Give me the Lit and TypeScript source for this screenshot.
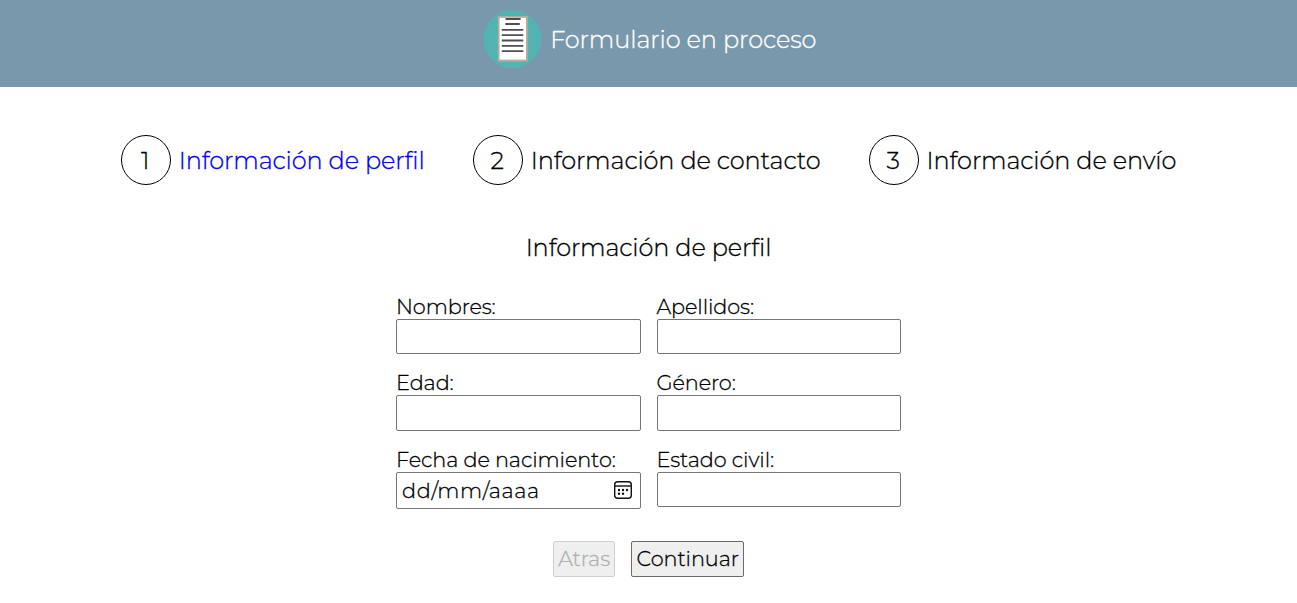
import { LitElement, html, css } from "lit";
import { customElement, state } from "lit/decorators.js";
import { classMap } from "lit/directives/class-map.js";

const STEPS = ["Información de perfil", "Información de contacto", "Información de envío"];
const FIELDS = [
  { label: "Nombres:", date: false },
  { label: "Apellidos:", date: false },
  { label: "Edad:", date: false },
  { label: "Género:", date: false },
  { label: "Fecha de nacimiento:", date: true },
  { label: "Estado civil:", date: false },
];

@customElement("form-header")
export class FormHeader extends LitElement {
  static styles = css`
    :host {
      display: flex;
      justify-content: center;
      align-items: center;
      gap: 9.6px;
      box-sizing: border-box;
      height: 87px;
      padding-bottom: 9px;
      background: #7a98ac;
      color: #fff;
    }
    .logo { display: block; width: 60px; height: 60px; }
    .title {
      font-size: 24px;
      line-height: 29px;
      letter-spacing: -0.08px;
      white-space: nowrap;
    }
  `;
  render() {
    return html`
      <svg class="logo" viewBox="0 0 60 60">
        <circle cx="31.3" cy="30" r="29" fill="#53b3b3" />
        <rect x="16.8" y="7" width="30" height="45.5" fill="#b5ad9c" />
        <rect x="18.6" y="8.8" width="26.4" height="41.8" fill="#fff" />
        <path d="M24.6 10h15M24.3 15h14.5M20.8 20.8h21.5M20.8 26.2h21.5M20.8 31.5h21.5M20.8 36.8h21.5M20.8 42.2h21.5"
          fill="none" stroke="#4e4e57" stroke-width="1.8" />
      </svg>
      <span class="title">Formulario en proceso</span>
    `;
  }
}

@customElement("app-root")
export class AppRoot extends LitElement {
  @state() private current = 0;

  static styles = css`
    :host {
      display: block;
      min-height: 603px;
      background: #fff;
      color: #000;
      font-family: Montserrat, sans-serif;
      font-weight: 300;
      -webkit-text-stroke: 0.3px currentColor;
    }
    .steps {
      display: flex;
      justify-content: center;
      gap: 48px;
      padding-top: 48px;
      font-size: 24px;
      line-height: 29px;
      letter-spacing: -0.11px;
      white-space: nowrap;
    }
    .step { display: flex; align-items: center; gap: 8px; }
    .number {
      display: flex;
      justify-content: center;
      align-items: center;
      box-sizing: border-box;
      width: 50px;
      height: 50px;
      padding-right: 1px;
      border: 1px solid #000;
      border-radius: 50%;
    }
    .active { color: #0000f0; }
    .heading {
      margin: 48px 0 31.8px;
      font-size: 24px;
      line-height: 29px;
      font-weight: 300;
      letter-spacing: -0.12px;
      text-align: center;
    }
    .form {
      display: grid;
      grid-template-columns: 244.5px 244.5px;
      justify-content: center;
      align-items: start;
      gap: 16px;
      font-size: 20.8px;
      line-height: 25px;
      letter-spacing: -0.09px;
    }
    .field { display: flex; flex-direction: column; }
    .input {
      box-sizing: border-box;
      width: 100%;
      height: 35.4px;
      margin: 0;
      padding: 0 4px;
      border: 1px solid #767676;
      border-radius: 2px;
      background: #fff;
      font: inherit;
      outline: none;
    }
    .date {
      display: flex;
      justify-content: space-between;
      align-items: center;
      height: 37px;
      padding: 0 7px 0 5px;
      letter-spacing: 0.65px;
    }
    .calendar { width: 20px; height: 20px; }
    .actions {
      display: flex;
      justify-content: center;
      gap: 16px;
      margin-top: 32px;
    }
    .button {
      box-sizing: border-box;
      height: 36px;
      margin: 0;
      padding: 0 4.3px;
      border: 1px solid #6b6b6b;
      border-radius: 2px;
      background: #efefef;
      color: #000;
      font: inherit;
      font-size: 20.8px;
      line-height: 25px;
      letter-spacing: -0.09px;
      -webkit-text-stroke: inherit;
    }
    .button:disabled { border-color: #cfcfcf; color: #b0b0b0; }
  `;

  private dateField() {
    return html`
      <div class="input date" role="textbox">
        <span>dd/mm/aaaa</span>
        <svg class="calendar" viewBox="0 0 20 20" fill="none" stroke="#111" stroke-width="1.4">
          <rect x="1.7" y="1.7" width="16.6" height="16.6" rx="3" />
          <path d="M1.7 6h16.6" />
          <g fill="#111" stroke="none">
            <circle cx="6" cy="10" r="1.2" /><circle cx="10" cy="10" r="1.2" /><circle cx="14" cy="10" r="1.2" />
            <circle cx="6" cy="13.7" r="1.2" /><circle cx="10" cy="13.7" r="1.2" />
          </g>
        </svg>
      </div>
    `;
  }

  render() {
    return html`
      <form-header></form-header>
      <nav class="steps">
        ${STEPS.map((name, i) => html`
          <div class="step">
            <span class="number">${i + 1}</span>
            <span class=${classMap({ active: i === this.current })}>${name}</span>
          </div>
        `)}
      </nav>
      <h2 class="heading">${STEPS[this.current]}</h2>
      <div class="form">
        ${FIELDS.map((f) => html`
          <label class="field">
            <span>${f.label}</span>
            ${f.date ? this.dateField() : html`<input class="input" type="text" />`}
          </label>
        `)}
      </div>
      <div class="actions">
        <button class="button" disabled>Atras</button>
        <button class="button">Continuar</button>
      </div>
    `;
  }
}
